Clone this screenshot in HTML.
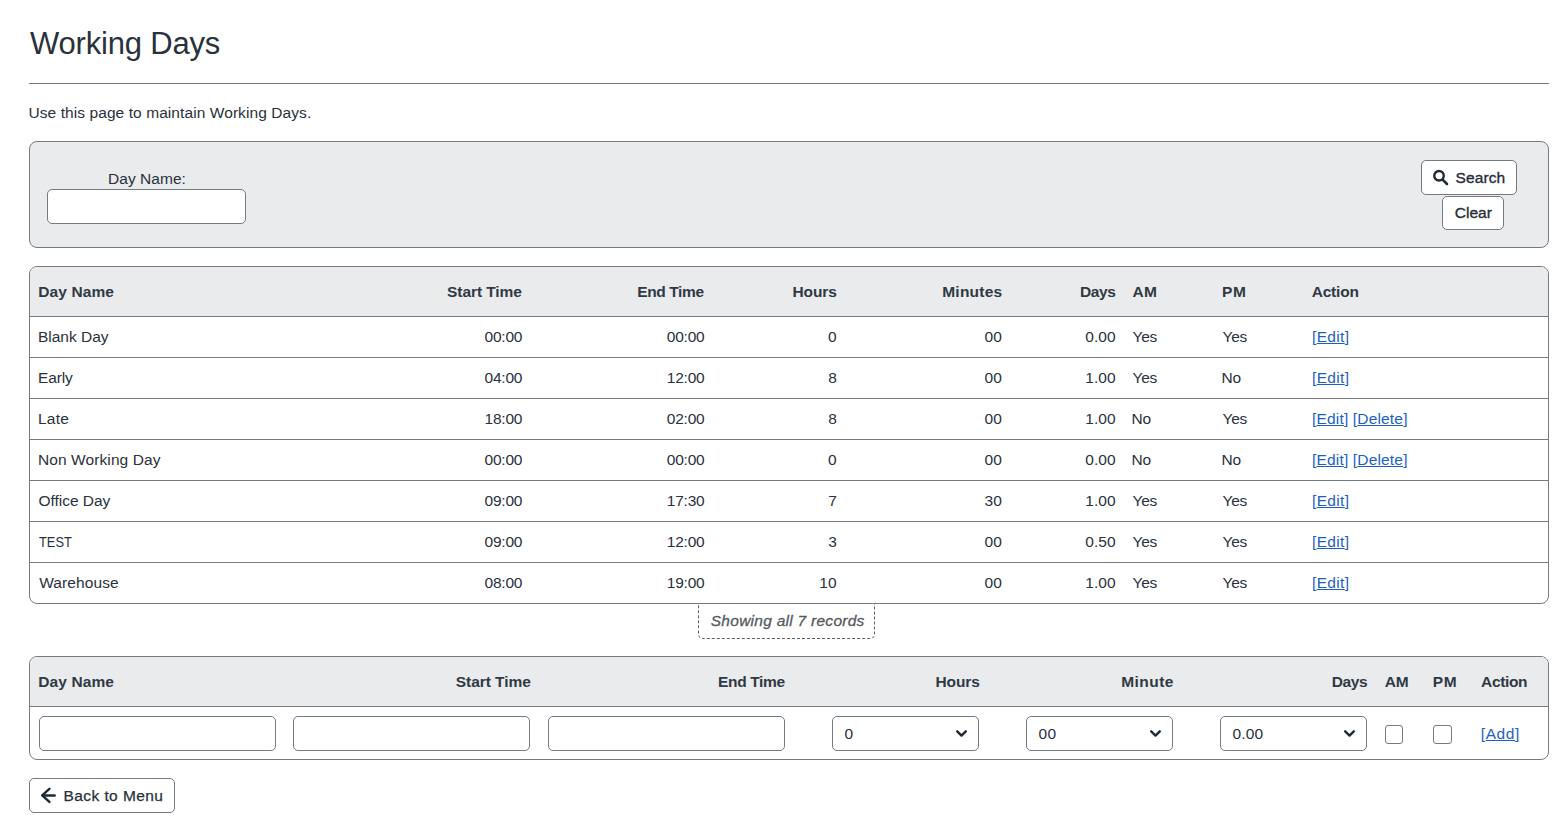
<!DOCTYPE html>
<html><head><meta charset="utf-8"><title>Working Days</title>
<style>
html,body{margin:0;padding:0;background:#fff;}
body{width:1565px;height:823px;position:relative;overflow:hidden;font-family:"Liberation Sans",sans-serif;}
.t{position:absolute;white-space:nowrap;}
u{text-decoration:underline;text-underline-offset:0.5px;text-decoration-thickness:1px;}
</style></head><body>
<div class="t" style="left:30.00px;top:27.76px;font-size:31px;line-height:31px;font-weight:400;color:#29313b;letter-spacing:-0.191px;">Working Days</div>
<div style="position:absolute;left:29px;top:83px;width:1520px;height:1px;box-sizing:border-box;background:#737a82"></div>
<div class="t" style="left:28.53px;top:104.88px;font-size:15.5px;line-height:15.5px;font-weight:400;color:#29313b;letter-spacing:0.078px;">Use this page to maintain Working Days.</div>
<div style="position:absolute;left:29px;top:141px;width:1520px;height:107px;box-sizing:border-box;background:#eaebed;border:1px solid #737a82;border-radius:8px"></div>
<div class="t" style="left:108.09px;top:170.88px;font-size:15.5px;line-height:15.5px;font-weight:400;color:#29313b;letter-spacing:0.036px;">Day Name:</div>
<div style="position:absolute;left:47px;top:189px;width:199px;height:35px;box-sizing:border-box;background:#fff;border:1px solid #737a82;border-radius:5px"></div>
<div style="position:absolute;left:1421px;top:160px;width:96px;height:35px;box-sizing:border-box;background:#fff;border:1px solid #737a82;border-radius:5px"></div>
<svg style="position:absolute;left:1432px;top:169px" width="17" height="17" viewBox="0 0 17 17"><circle cx="7" cy="6.8" r="4.75" fill="none" stroke="#1f2a35" stroke-width="2.4"/><line x1="10.6" y1="10.6" x2="15" y2="15" stroke="#1f2a35" stroke-width="2.6" stroke-linecap="round"/></svg>
<div class="t" style="left:1455.52px;top:169.88px;font-size:15.5px;line-height:15.5px;font-weight:400;color:#29313b;letter-spacing:0.109px;-webkit-text-stroke:0.35px #212b36;">Search</div>
<div style="position:absolute;left:1442px;top:196px;width:62px;height:34px;box-sizing:border-box;background:#fff;border:1px solid #737a82;border-radius:5px"></div>
<div class="t" style="left:1454.67px;top:204.88px;font-size:15.5px;line-height:15.5px;font-weight:400;color:#29313b;letter-spacing:0.041px;-webkit-text-stroke:0.35px #212b36;">Clear</div>
<div style="position:absolute;left:698px;top:603px;width:177px;height:36px;box-sizing:border-box;border:1px dashed #5a5f66;border-top:none;border-radius:0 0 5px 5px;background:#fff"></div>
<div style="position:absolute;left:29px;top:266px;width:1520px;height:338px;box-sizing:border-box;background:#fff;border:1px solid #737a82;border-radius:8px;overflow:hidden"></div>
<div style="position:absolute;left:30px;top:267px;width:1518px;height:49px;box-sizing:border-box;background:#eaebed;border-top-left-radius:7px;border-top-right-radius:7px"></div>
<div style="position:absolute;left:30px;top:316px;width:1518px;height:1px;box-sizing:border-box;background:#737a82"></div>
<div style="position:absolute;left:30px;top:357px;width:1518px;height:1px;box-sizing:border-box;background:#737a82"></div>
<div style="position:absolute;left:30px;top:398px;width:1518px;height:1px;box-sizing:border-box;background:#737a82"></div>
<div style="position:absolute;left:30px;top:439px;width:1518px;height:1px;box-sizing:border-box;background:#737a82"></div>
<div style="position:absolute;left:30px;top:480px;width:1518px;height:1px;box-sizing:border-box;background:#737a82"></div>
<div style="position:absolute;left:30px;top:521px;width:1518px;height:1px;box-sizing:border-box;background:#737a82"></div>
<div style="position:absolute;left:30px;top:562px;width:1518px;height:1px;box-sizing:border-box;background:#737a82"></div>
<div class="t" style="left:38.33px;top:283.88px;font-size:15.5px;line-height:15.5px;font-weight:700;color:#2f3944;letter-spacing:0.100px;">Day Name</div>
<div class="t" style="left:447.06px;top:283.88px;font-size:15.5px;line-height:15.5px;font-weight:700;color:#2f3944;letter-spacing:-0.077px;">Start Time</div>
<div class="t" style="left:637.23px;top:283.88px;font-size:15.5px;line-height:15.5px;font-weight:700;color:#2f3944;letter-spacing:-0.375px;">End Time</div>
<div class="t" style="left:792.43px;top:283.88px;font-size:15.5px;line-height:15.5px;font-weight:700;color:#2f3944;letter-spacing:-0.071px;">Hours</div>
<div class="t" style="left:942.23px;top:283.88px;font-size:15.5px;line-height:15.5px;font-weight:700;color:#2f3944;letter-spacing:0.240px;">Minutes</div>
<div class="t" style="left:1080.03px;top:283.88px;font-size:15.5px;line-height:15.5px;font-weight:700;color:#2f3944;letter-spacing:-0.386px;">Days</div>
<div class="t" style="left:1132.46px;top:283.88px;font-size:15.5px;line-height:15.5px;font-weight:700;color:#2f3944;letter-spacing:0.439px;">AM</div>
<div class="t" style="left:1222.03px;top:283.88px;font-size:15.5px;line-height:15.5px;font-weight:700;color:#2f3944;letter-spacing:0.721px;">PM</div>
<div class="t" style="left:1311.76px;top:283.88px;font-size:15.5px;line-height:15.5px;font-weight:700;color:#2f3944;letter-spacing:-0.225px;">Action</div>
<div class="t" style="left:37.99px;top:328.88px;font-size:15.5px;line-height:15.5px;font-weight:400;color:#29313b;letter-spacing:-0.017px;">Blank Day</div>
<div class="t" style="left:484.52px;top:328.88px;font-size:15.5px;line-height:15.5px;font-weight:400;color:#29313b;letter-spacing:-0.204px;">00:00</div>
<div class="t" style="left:666.72px;top:328.88px;font-size:15.5px;line-height:15.5px;font-weight:400;color:#29313b;letter-spacing:-0.204px;">00:00</div>
<div class="t" style="left:828.07px;top:328.88px;font-size:15.5px;line-height:15.5px;font-weight:400;color:#29313b;letter-spacing:0.230px;">0</div>
<div class="t" style="left:984.52px;top:328.88px;font-size:15.5px;line-height:15.5px;font-weight:400;color:#29313b;letter-spacing:0.230px;">00</div>
<div class="t" style="left:1085.22px;top:328.88px;font-size:15.5px;line-height:15.5px;font-weight:400;color:#29313b;letter-spacing:0.101px;">0.00</div>
<div class="t" style="left:1132.56px;top:328.88px;font-size:15.5px;line-height:15.5px;font-weight:400;color:#29313b;letter-spacing:-0.330px;">Yes</div>
<div class="t" style="left:1222.56px;top:328.88px;font-size:15.5px;line-height:15.5px;font-weight:400;color:#29313b;letter-spacing:-0.330px;">Yes</div>
<div class="t" style="left:1312.03px;top:328.88px;font-size:15.5px;line-height:15.5px;font-weight:400;color:#1d5fc0;letter-spacing:0.333px;">[<u>Edit</u>]</div>
<div class="t" style="left:37.99px;top:369.88px;font-size:15.5px;line-height:15.5px;font-weight:400;color:#29313b;letter-spacing:-0.151px;">Early</div>
<div class="t" style="left:484.52px;top:369.88px;font-size:15.5px;line-height:15.5px;font-weight:400;color:#29313b;letter-spacing:-0.204px;">04:00</div>
<div class="t" style="left:666.72px;top:369.88px;font-size:15.5px;line-height:15.5px;font-weight:400;color:#29313b;letter-spacing:-0.204px;">12:00</div>
<div class="t" style="left:828.31px;top:369.88px;font-size:15.5px;line-height:15.5px;font-weight:400;color:#29313b;letter-spacing:0.230px;">8</div>
<div class="t" style="left:984.52px;top:369.88px;font-size:15.5px;line-height:15.5px;font-weight:400;color:#29313b;letter-spacing:0.230px;">00</div>
<div class="t" style="left:1085.22px;top:369.88px;font-size:15.5px;line-height:15.5px;font-weight:400;color:#29313b;letter-spacing:0.101px;">1.00</div>
<div class="t" style="left:1132.56px;top:369.88px;font-size:15.5px;line-height:15.5px;font-weight:400;color:#29313b;letter-spacing:-0.330px;">Yes</div>
<div class="t" style="left:1221.59px;top:369.88px;font-size:15.5px;line-height:15.5px;font-weight:400;color:#29313b;letter-spacing:-0.330px;">No</div>
<div class="t" style="left:1312.03px;top:369.88px;font-size:15.5px;line-height:15.5px;font-weight:400;color:#1d5fc0;letter-spacing:0.333px;">[<u>Edit</u>]</div>
<div class="t" style="left:37.99px;top:410.88px;font-size:15.5px;line-height:15.5px;font-weight:400;color:#29313b;letter-spacing:0.224px;">Late</div>
<div class="t" style="left:484.52px;top:410.88px;font-size:15.5px;line-height:15.5px;font-weight:400;color:#29313b;letter-spacing:-0.204px;">18:00</div>
<div class="t" style="left:666.72px;top:410.88px;font-size:15.5px;line-height:15.5px;font-weight:400;color:#29313b;letter-spacing:-0.204px;">02:00</div>
<div class="t" style="left:828.31px;top:410.88px;font-size:15.5px;line-height:15.5px;font-weight:400;color:#29313b;letter-spacing:0.230px;">8</div>
<div class="t" style="left:984.52px;top:410.88px;font-size:15.5px;line-height:15.5px;font-weight:400;color:#29313b;letter-spacing:0.230px;">00</div>
<div class="t" style="left:1085.22px;top:410.88px;font-size:15.5px;line-height:15.5px;font-weight:400;color:#29313b;letter-spacing:0.101px;">1.00</div>
<div class="t" style="left:1131.59px;top:410.88px;font-size:15.5px;line-height:15.5px;font-weight:400;color:#29313b;letter-spacing:-0.330px;">No</div>
<div class="t" style="left:1222.56px;top:410.88px;font-size:15.5px;line-height:15.5px;font-weight:400;color:#29313b;letter-spacing:-0.330px;">Yes</div>
<div class="t" style="left:1312.03px;top:410.88px;font-size:15.5px;line-height:15.5px;font-weight:400;color:#1d5fc0;letter-spacing:0.167px;">[<u>Edit</u>] [<u>Delete</u>]</div>
<div class="t" style="left:37.99px;top:451.88px;font-size:15.5px;line-height:15.5px;font-weight:400;color:#29313b;letter-spacing:0.095px;">Non Working Day</div>
<div class="t" style="left:484.52px;top:451.88px;font-size:15.5px;line-height:15.5px;font-weight:400;color:#29313b;letter-spacing:-0.204px;">00:00</div>
<div class="t" style="left:666.72px;top:451.88px;font-size:15.5px;line-height:15.5px;font-weight:400;color:#29313b;letter-spacing:-0.204px;">00:00</div>
<div class="t" style="left:828.07px;top:451.88px;font-size:15.5px;line-height:15.5px;font-weight:400;color:#29313b;letter-spacing:0.230px;">0</div>
<div class="t" style="left:984.52px;top:451.88px;font-size:15.5px;line-height:15.5px;font-weight:400;color:#29313b;letter-spacing:0.230px;">00</div>
<div class="t" style="left:1085.22px;top:451.88px;font-size:15.5px;line-height:15.5px;font-weight:400;color:#29313b;letter-spacing:0.101px;">0.00</div>
<div class="t" style="left:1131.59px;top:451.88px;font-size:15.5px;line-height:15.5px;font-weight:400;color:#29313b;letter-spacing:-0.330px;">No</div>
<div class="t" style="left:1221.59px;top:451.88px;font-size:15.5px;line-height:15.5px;font-weight:400;color:#29313b;letter-spacing:-0.330px;">No</div>
<div class="t" style="left:1312.03px;top:451.88px;font-size:15.5px;line-height:15.5px;font-weight:400;color:#1d5fc0;letter-spacing:0.167px;">[<u>Edit</u>] [<u>Delete</u>]</div>
<div class="t" style="left:38.47px;top:492.88px;font-size:15.5px;line-height:15.5px;font-weight:400;color:#29313b;letter-spacing:-0.027px;">Office Day</div>
<div class="t" style="left:484.52px;top:492.88px;font-size:15.5px;line-height:15.5px;font-weight:400;color:#29313b;letter-spacing:-0.204px;">09:00</div>
<div class="t" style="left:666.72px;top:492.88px;font-size:15.5px;line-height:15.5px;font-weight:400;color:#29313b;letter-spacing:-0.204px;">17:30</div>
<div class="t" style="left:828.31px;top:492.88px;font-size:15.5px;line-height:15.5px;font-weight:400;color:#29313b;letter-spacing:0.230px;">7</div>
<div class="t" style="left:984.52px;top:492.88px;font-size:15.5px;line-height:15.5px;font-weight:400;color:#29313b;letter-spacing:0.230px;">30</div>
<div class="t" style="left:1085.22px;top:492.88px;font-size:15.5px;line-height:15.5px;font-weight:400;color:#29313b;letter-spacing:0.101px;">1.00</div>
<div class="t" style="left:1132.56px;top:492.88px;font-size:15.5px;line-height:15.5px;font-weight:400;color:#29313b;letter-spacing:-0.330px;">Yes</div>
<div class="t" style="left:1222.56px;top:492.88px;font-size:15.5px;line-height:15.5px;font-weight:400;color:#29313b;letter-spacing:-0.330px;">Yes</div>
<div class="t" style="left:1312.03px;top:492.88px;font-size:15.5px;line-height:15.5px;font-weight:400;color:#1d5fc0;letter-spacing:0.333px;">[<u>Edit</u>]</div>
<div class="t" style="left:38.96px;top:533.88px;font-size:15.5px;line-height:15.5px;font-weight:400;color:#29313b;transform:scaleX(0.8260);transform-origin:0.24px 0;">TEST</div>
<div class="t" style="left:484.52px;top:533.88px;font-size:15.5px;line-height:15.5px;font-weight:400;color:#29313b;letter-spacing:-0.204px;">09:00</div>
<div class="t" style="left:666.72px;top:533.88px;font-size:15.5px;line-height:15.5px;font-weight:400;color:#29313b;letter-spacing:-0.204px;">12:00</div>
<div class="t" style="left:828.31px;top:533.88px;font-size:15.5px;line-height:15.5px;font-weight:400;color:#29313b;letter-spacing:0.230px;">3</div>
<div class="t" style="left:984.52px;top:533.88px;font-size:15.5px;line-height:15.5px;font-weight:400;color:#29313b;letter-spacing:0.230px;">00</div>
<div class="t" style="left:1085.22px;top:533.88px;font-size:15.5px;line-height:15.5px;font-weight:400;color:#29313b;letter-spacing:0.101px;">0.50</div>
<div class="t" style="left:1132.56px;top:533.88px;font-size:15.5px;line-height:15.5px;font-weight:400;color:#29313b;letter-spacing:-0.330px;">Yes</div>
<div class="t" style="left:1222.56px;top:533.88px;font-size:15.5px;line-height:15.5px;font-weight:400;color:#29313b;letter-spacing:-0.330px;">Yes</div>
<div class="t" style="left:1312.03px;top:533.88px;font-size:15.5px;line-height:15.5px;font-weight:400;color:#1d5fc0;letter-spacing:0.333px;">[<u>Edit</u>]</div>
<div class="t" style="left:39.20px;top:574.88px;font-size:15.5px;line-height:15.5px;font-weight:400;color:#29313b;letter-spacing:0.105px;">Warehouse</div>
<div class="t" style="left:484.52px;top:574.88px;font-size:15.5px;line-height:15.5px;font-weight:400;color:#29313b;letter-spacing:-0.204px;">08:00</div>
<div class="t" style="left:666.72px;top:574.88px;font-size:15.5px;line-height:15.5px;font-weight:400;color:#29313b;letter-spacing:-0.204px;">19:00</div>
<div class="t" style="left:819.22px;top:574.88px;font-size:15.5px;line-height:15.5px;font-weight:400;color:#29313b;letter-spacing:0.230px;">10</div>
<div class="t" style="left:984.52px;top:574.88px;font-size:15.5px;line-height:15.5px;font-weight:400;color:#29313b;letter-spacing:0.230px;">00</div>
<div class="t" style="left:1085.22px;top:574.88px;font-size:15.5px;line-height:15.5px;font-weight:400;color:#29313b;letter-spacing:0.101px;">1.00</div>
<div class="t" style="left:1132.56px;top:574.88px;font-size:15.5px;line-height:15.5px;font-weight:400;color:#29313b;letter-spacing:-0.330px;">Yes</div>
<div class="t" style="left:1222.56px;top:574.88px;font-size:15.5px;line-height:15.5px;font-weight:400;color:#29313b;letter-spacing:-0.330px;">Yes</div>
<div class="t" style="left:1312.03px;top:574.88px;font-size:15.5px;line-height:15.5px;font-weight:400;color:#1d5fc0;letter-spacing:0.333px;">[<u>Edit</u>]</div>
<div class="t" style="left:710.76px;top:612.88px;font-size:15.5px;line-height:15.5px;font-weight:400;color:#55595e;font-style:italic;letter-spacing:0.270px;-webkit-text-stroke:0.3px #55595e;">Showing all 7 records</div>
<div style="position:absolute;left:29px;top:656px;width:1520px;height:104px;box-sizing:border-box;background:#fff;border:1px solid #737a82;border-radius:8px;overflow:hidden"></div>
<div style="position:absolute;left:30px;top:657px;width:1518px;height:49px;box-sizing:border-box;background:#eaebed;border-top-left-radius:7px;border-top-right-radius:7px"></div>
<div style="position:absolute;left:30px;top:706px;width:1518px;height:1px;box-sizing:border-box;background:#737a82"></div>
<div class="t" style="left:38.33px;top:673.88px;font-size:15.5px;line-height:15.5px;font-weight:700;color:#2f3944;letter-spacing:0.100px;">Day Name</div>
<div class="t" style="left:455.76px;top:673.88px;font-size:15.5px;line-height:15.5px;font-weight:700;color:#2f3944;letter-spacing:-0.043px;">Start Time</div>
<div class="t" style="left:718.03px;top:673.88px;font-size:15.5px;line-height:15.5px;font-weight:700;color:#2f3944;letter-spacing:-0.332px;">End Time</div>
<div class="t" style="left:935.43px;top:673.88px;font-size:15.5px;line-height:15.5px;font-weight:700;color:#2f3944;letter-spacing:-0.071px;">Hours</div>
<div class="t" style="left:1121.23px;top:673.88px;font-size:15.5px;line-height:15.5px;font-weight:700;color:#2f3944;letter-spacing:0.464px;">Minute</div>
<div class="t" style="left:1331.63px;top:673.88px;font-size:15.5px;line-height:15.5px;font-weight:700;color:#2f3944;letter-spacing:-0.386px;">Days</div>
<div class="t" style="left:1384.66px;top:673.88px;font-size:15.5px;line-height:15.5px;font-weight:700;color:#2f3944;letter-spacing:-0.161px;">AM</div>
<div class="t" style="left:1432.73px;top:673.88px;font-size:15.5px;line-height:15.5px;font-weight:700;color:#2f3944;letter-spacing:0.721px;">PM</div>
<div class="t" style="left:1481.06px;top:673.88px;font-size:15.5px;line-height:15.5px;font-weight:700;color:#2f3944;letter-spacing:-0.345px;">Action</div>
<div style="position:absolute;left:39px;top:716px;width:237px;height:35px;box-sizing:border-box;background:#fff;border:1px solid #737a82;border-radius:5px"></div>
<div style="position:absolute;left:293px;top:716px;width:237px;height:35px;box-sizing:border-box;background:#fff;border:1px solid #737a82;border-radius:5px"></div>
<div style="position:absolute;left:548px;top:716px;width:237px;height:35px;box-sizing:border-box;background:#fff;border:1px solid #737a82;border-radius:5px"></div>
<div style="position:absolute;left:832px;top:716px;width:147px;height:35px;box-sizing:border-box;background:#fff;border:1px solid #737a82;border-radius:5px"></div>
<div class="t" style="left:844.62px;top:725.88px;font-size:15.5px;line-height:15.5px;font-weight:400;color:#29313b;">0</div>
<svg style="position:absolute;left:955px;top:729px" width="13" height="10" viewBox="0 0 13 10"><polyline points="2.2,2.3 6.5,6.6 10.8,2.3" fill="none" stroke="#1f2a35" stroke-width="2.4" stroke-linecap="round" stroke-linejoin="round"/></svg>
<div style="position:absolute;left:1026px;top:716px;width:147px;height:35px;box-sizing:border-box;background:#fff;border:1px solid #737a82;border-radius:5px"></div>
<div class="t" style="left:1038.62px;top:725.88px;font-size:15.5px;line-height:15.5px;font-weight:400;color:#29313b;letter-spacing:0.230px;">00</div>
<svg style="position:absolute;left:1149px;top:729px" width="13" height="10" viewBox="0 0 13 10"><polyline points="2.2,2.3 6.5,6.6 10.8,2.3" fill="none" stroke="#1f2a35" stroke-width="2.4" stroke-linecap="round" stroke-linejoin="round"/></svg>
<div style="position:absolute;left:1220px;top:716px;width:147px;height:35px;box-sizing:border-box;background:#fff;border:1px solid #737a82;border-radius:5px"></div>
<div class="t" style="left:1232.62px;top:725.88px;font-size:15.5px;line-height:15.5px;font-weight:400;color:#29313b;letter-spacing:0.101px;">0.00</div>
<svg style="position:absolute;left:1343px;top:729px" width="13" height="10" viewBox="0 0 13 10"><polyline points="2.2,2.3 6.5,6.6 10.8,2.3" fill="none" stroke="#1f2a35" stroke-width="2.4" stroke-linecap="round" stroke-linejoin="round"/></svg>
<div style="position:absolute;left:1385px;top:725px;width:18px;height:19px;box-sizing:border-box;background:#fff;border:1px solid #737a82;border-radius:3px"></div>
<div style="position:absolute;left:1433px;top:725px;width:19px;height:19px;box-sizing:border-box;background:#fff;border:1px solid #737a82;border-radius:3px"></div>
<div class="t" style="left:1480.73px;top:725.88px;font-size:15.5px;line-height:15.5px;font-weight:400;color:#1d5fc0;letter-spacing:0.623px;">[<u>Add</u>]</div>
<div style="position:absolute;left:29px;top:778px;width:146px;height:35px;box-sizing:border-box;background:#fff;border:1px solid #737a82;border-radius:5px"></div>
<svg style="position:absolute;left:40px;top:787px" width="17" height="17" viewBox="0 0 17 17"><polyline points="9.4,1.9 2.2,8.4 9.4,14.9" fill="none" stroke="#1f2a35" stroke-width="2.5" stroke-linecap="round" stroke-linejoin="round"/><line x1="3" y1="8.4" x2="14.6" y2="8.4" stroke="#1f2a35" stroke-width="2.5" stroke-linecap="round"/></svg>
<div class="t" style="left:63.49px;top:787.88px;font-size:15.5px;line-height:15.5px;font-weight:400;color:#29313b;letter-spacing:0.428px;-webkit-text-stroke:0.25px #212b36;">Back to Menu</div>
</body></html>
